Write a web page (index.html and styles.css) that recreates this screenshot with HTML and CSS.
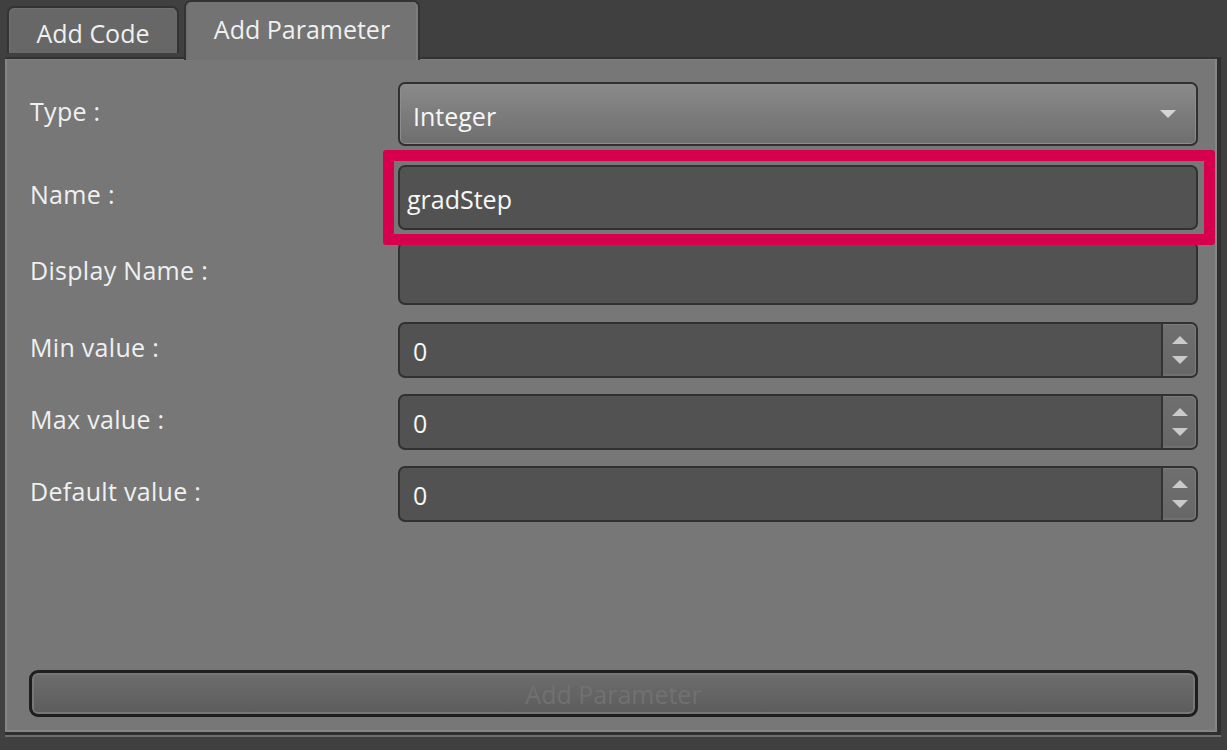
FILE: index.html
```html
<!DOCTYPE html>
<html>
<head>
<meta charset="utf-8">
<link rel="stylesheet" href="styles.css">
</head>
<body>
<div class="window">
  <div class="tabbar">
    <div class="tab">Add Code</div>
    <div class="tab active">Add Parameter</div>
  </div>
  <div class="panel">
    <div class="form">
      <div class="row row-type">
        <div class="label">Type :</div>
        <div class="combo"><span class="value">Integer</span><span class="combo-arrow"></span></div>
      </div>
      <div class="row row-name">
        <div class="label">Name :</div>
        <div class="line"><span class="value">gradStep</span></div>
      </div>
      <div class="row row-display">
        <div class="label">Display Name :</div>
        <div class="line"></div>
      </div>
      <div class="row row-spin">
        <div class="label">Min value :</div>
        <div class="spin"><span class="value">0</span><span class="spin-btns"><span class="arr-up"></span><span class="arr-down"></span></span></div>
      </div>
      <div class="row row-spin">
        <div class="label">Max value :</div>
        <div class="spin"><span class="value">0</span><span class="spin-btns"><span class="arr-up"></span><span class="arr-down"></span></span></div>
      </div>
      <div class="row row-spin">
        <div class="label">Default value :</div>
        <div class="spin"><span class="value">0</span><span class="spin-btns"><span class="arr-up"></span><span class="arr-down"></span></span></div>
      </div>
    </div>
    <div class="spacer"></div>
    <div class="add-btn">Add Parameter</div>
  </div>
</div>
<div class="highlight"></div>
</body>
</html>
```

FILE: styles.css
```css
html, body {
  margin: 0;
  padding: 0;
}
body {
  background: #404040;
  width: 1227px;
  height: 750px;
  overflow: hidden;
  font-family: "Open Sans", "Noto Sans", sans-serif;
  font-size: 25px;
  color: #f2f2f2;
  position: relative;
}
.window {
  display: flex;
  flex-direction: column;
}
.tabbar {
  display: flex;
  align-items: flex-start;
  height: 57px;
  padding-left: 7px;
  position: relative;
  z-index: 1;
}
.tab {
  box-sizing: border-box;
  margin-top: 6px;
  height: 47px;
  width: 172px;
  border: 2px solid #333;
  border-bottom: none;
  border-radius: 7px 7px 0 0;
  background: #676767;
  box-shadow: inset 1px 1px 0 #707070;
  display: flex;
  align-items: center;
  justify-content: center;
  padding-top: 4px;
  color: #f0f0f0;
}
.tab.active {
  margin-top: 0;
  margin-left: 5px;
  height: 60px;
  width: 236px;
  background: #737373;
  box-shadow: inset -2px 0 0 #7d7d7d, inset 2px 0 0 #6f6f6f;
  padding-top: 0;
  padding-bottom: 4px;
}
.panel {
  box-sizing: border-box;
  margin-left: 5px;
  width: 1216px;
  height: 678px;
  background: #777777;
  border-top: 2px solid #333;
  border-right: 4px solid #2f2f2f;
  border-bottom: 3px solid #2f2f2f;
  box-shadow: inset 2px 0 0 #858585, inset -2px 0 0 #858585, inset 0 -2px 0 #858585, inset 0 1px 0 #7e7e7e, 0 2px 0 #6e6e6e;
  display: flex;
  flex-direction: column;
  padding: 23px 19px 15px 25px;
}
.form {
  display: flex;
  flex-direction: column;
}
.row {
  display: flex;
  align-items: center;
}
.label {
  width: 368px;
  flex: none;
  padding-bottom: 7px;
  color: #f0f0f0;
  letter-spacing: 0.3px;
}
.row-type { height: 64px; }
.row-name { height: 65px; margin-top: 19px; }
.row-display { height: 64px; margin-top: 11px; }
.row-spin { height: 56px; margin-top: 16px; }
.row-spin:nth-child(4) { margin-top: 17px; }

.combo, .line, .spin {
  box-sizing: border-box;
  flex: 1;
  height: 100%;
  border: 2px solid #313131;
  border-radius: 7px;
  display: flex;
  align-items: center;
  color: #f7f7f7;
}
.combo {
  background: linear-gradient(#8a8a8a, #6e6e6e);
  box-shadow: inset 0 0 0 1px #8c8c8c;
  padding-left: 13px;
  padding-right: 20px;
  padding-top: 3px;
}
.combo .value { flex: 1; }
.combo-arrow {
  width: 0;
  height: 0;
  border-left: 8.5px solid transparent;
  border-right: 8.5px solid transparent;
  border-top: 8px solid #d4d4d4;
  margin-top: -3px;
}
.line {
  background: #525252;
  padding-left: 7px;
  padding-top: 3px;
}
.spin {
  background: #525252;
  padding-left: 13px;
  overflow: hidden;
}
.spin .value {
  flex: 1;
  padding-top: 2px;
}
.spin-btns {
  align-self: stretch;
  width: 33px;
  border-left: 2px solid #333;
  background: linear-gradient(#6f6f6f, #676767);
  box-shadow: inset -1px 0 0 #7a7a7a, inset 0 -2px 0 #707070, inset 0 1px 0 #7a7a7a;
  border-radius: 0 5px 5px 0;
  display: flex;
  flex-direction: column;
  align-items: center;
  justify-content: center;
  gap: 12px;
}
.arr-up {
  width: 0;
  height: 0;
  border-left: 8.5px solid transparent;
  border-right: 8.5px solid transparent;
  border-bottom: 8px solid #cacaca;
}
.arr-down {
  width: 0;
  height: 0;
  border-left: 8.5px solid transparent;
  border-right: 8.5px solid transparent;
  border-top: 8px solid #cacaca;
}
.spacer { flex: 1; }
.add-btn {
  box-sizing: border-box;
  margin-left: -1px;
  height: 47px;
  border: 3px solid #1e1e1e;
  border-radius: 9px;
  background: linear-gradient(#6d6d6d, #5c5c5c);
  box-shadow: inset 0 0 0 2px #777777;
  font-size: 25px;
  line-height: 39px;
  text-align: center;
  color: #717171;
  padding: 2px 0 0 0;
}
.highlight {
  position: absolute;
  left: 383px;
  top: 150px;
  width: 832px;
  height: 95px;
  box-sizing: border-box;
  border: 11px solid #d6004f;
  border-radius: 3px;
  pointer-events: none;
}
```
